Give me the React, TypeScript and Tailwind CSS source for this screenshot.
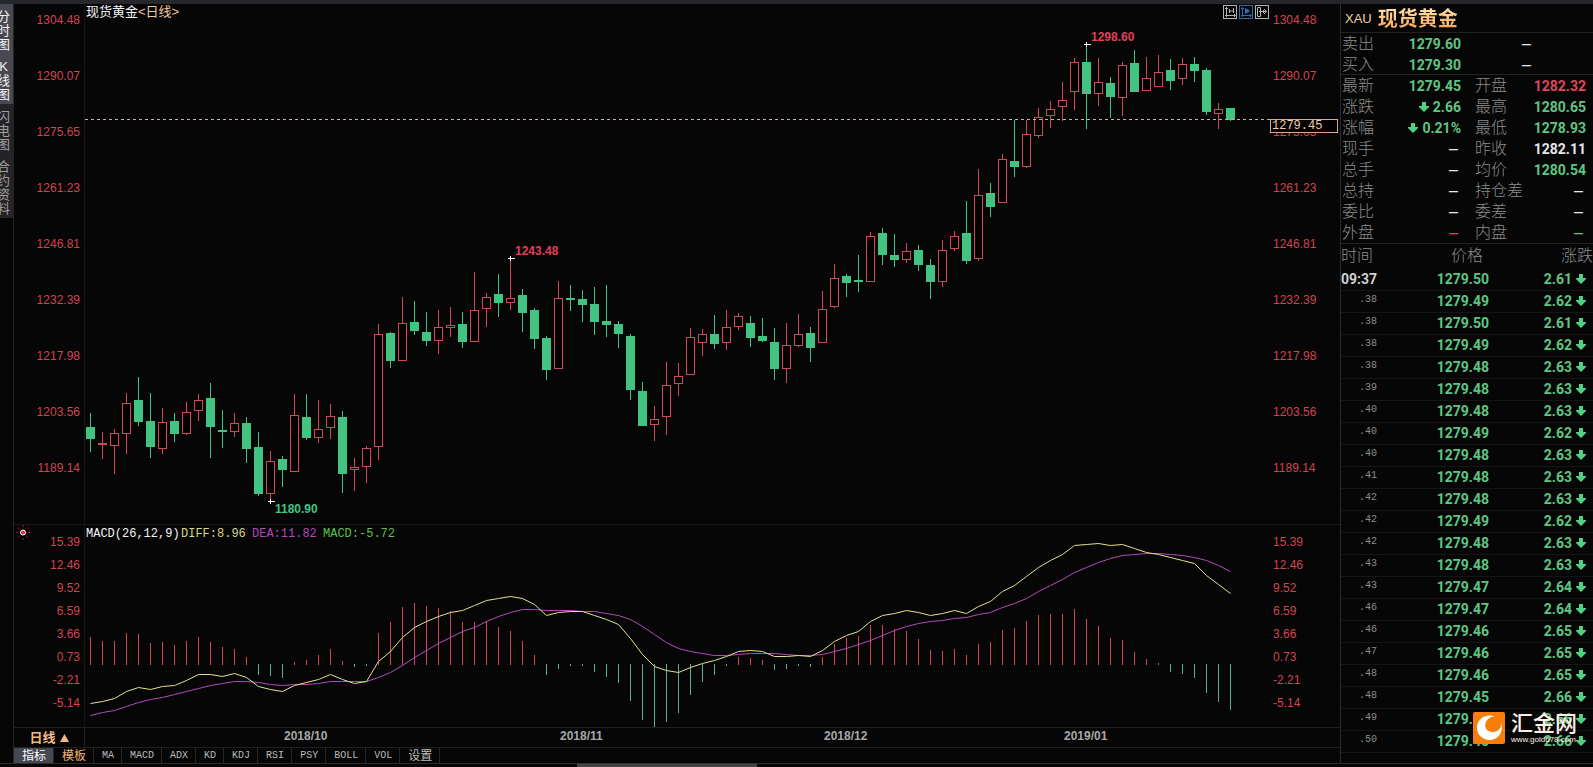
import { useState } from "react";

type Candle = [number, number, number, number, "u" | "d"];

// high, body top, body bottom, low (pane pixels), direction
const candles: Candle[] = [
  [413, 427, 439, 452, "d"], [432, 443, 444, 459, "u"], [429, 433, 446, 474, "u"], [393, 403, 434, 454, "u"],
  [377, 400, 422, 426, "d"], [393, 421, 447, 458, "d"], [408, 422, 449, 454, "u"], [413, 421, 434, 442, "d"],
  [402, 412, 434, 435, "u"], [394, 400, 411, 421, "u"], [383, 398, 427, 458, "d"], [410, 430, 432, 448, "d"],
  [413, 423, 432, 437, "u"], [417, 423, 449, 463, "d"], [432, 447, 494, 496, "d"], [451, 461, 494, 500, "u"],
  [456, 459, 470, 487, "d"], [394, 415, 472, 472, "u"], [394, 417, 438, 440, "d"], [400, 429, 438, 443, "u"],
  [404, 416, 428, 439, "u"], [411, 417, 474, 493, "d"], [458, 467, 470, 491, "u"], [446, 448, 467, 483, "u"],
  [324, 334, 447, 460, "u"], [332, 333, 361, 368, "d"], [297, 323, 361, 361, "u"], [301, 322, 331, 335, "d"],
  [312, 332, 341, 346, "d"], [310, 327, 341, 354, "u"], [307, 325, 328, 337, "u"], [312, 324, 342, 348, "d"],
  [272, 310, 342, 342, "u"], [293, 297, 309, 327, "u"], [274, 294, 303, 317, "d"], [260, 298, 303, 310, "u"],
  [289, 295, 313, 332, "d"], [308, 310, 339, 349, "d"], [336, 338, 370, 380, "d"], [281, 298, 369, 369, "u"],
  [285, 298, 300, 311, "d"], [290, 299, 305, 322, "d"], [287, 304, 322, 335, "d"], [285, 321, 325, 337, "d"],
  [321, 324, 334, 348, "d"], [334, 336, 390, 400, "d"], [382, 391, 426, 426, "d"], [406, 419, 425, 441, "u"],
  [362, 385, 417, 435, "u"], [363, 376, 384, 396, "u"], [328, 337, 375, 375, "u"], [329, 334, 343, 356, "u"],
  [315, 334, 344, 349, "d"], [310, 327, 343, 350, "u"], [313, 316, 327, 330, "u"], [316, 323, 338, 347, "d"],
  [318, 336, 341, 342, "d"], [328, 342, 369, 380, "d"], [323, 345, 369, 383, "u"], [314, 334, 346, 347, "u"],
  [327, 333, 348, 362, "d"], [291, 309, 343, 343, "u"], [264, 278, 307, 308, "u"], [274, 276, 283, 297, "d"],
  [255, 280, 282, 292, "d"], [232, 236, 282, 282, "u"], [228, 233, 255, 265, "d"], [234, 255, 260, 267, "d"],
  [243, 251, 260, 263, "u"], [245, 250, 265, 271, "d"], [259, 265, 282, 299, "d"], [240, 250, 282, 287, "u"],
  [231, 236, 249, 251, "u"], [201, 233, 261, 264, "d"], [169, 195, 259, 261, "u"], [183, 193, 207, 217, "d"],
  [154, 159, 203, 203, "u"], [120, 161, 167, 177, "d"], [120, 134, 167, 168, "u"], [108, 117, 136, 138, "u"],
  [101, 109, 116, 128, "u"], [82, 100, 107, 121, "u"], [58, 62, 92, 110, "u"], [45, 62, 94, 129, "d"],
  [58, 82, 94, 106, "u"], [77, 83, 97, 118, "d"], [62, 65, 98, 116, "u"], [50, 63, 92, 92, "d"],
  [57, 78, 91, 91, "u"], [55, 72, 87, 87, "u"], [59, 70, 81, 90, "d"], [58, 64, 79, 85, "u"],
  [57, 64, 71, 82, "d"], [68, 70, 112, 115, "d"], [103, 109, 114, 129, "u"], [108, 108, 120, 121, "d"],
];

const histogram = [
  637, 641, 641, 633, 634, 643, 642, 645, 641, 637, 642, 647, 649, 657, 675, 676, 678, 662, 660, 655, 649, 661, 667,
  666, 633, 622, 607, 603, 606, 608, 611, 622, 622, 621, 627, 631, 641, 655, 675, 669, 666, 666, 672, 677, 683, 701,
  720, 727, 722, 713, 695, 682, 675, 666, 657, 658, 660, 670, 669, 666, 667, 657, 644, 638, 636, 625, 625, 629, 631,
  639, 650, 651, 649, 655, 644, 642, 630, 628, 621, 615, 614, 614, 609, 619, 626, 638, 640, 652, 659, 663, 672, 674,
  678, 693, 702, 710,
];

const diff = [
  703, 701, 698, 691, 687, 689, 686, 685, 680, 674, 674, 676, 673, 677, 686, 689, 691, 685, 682, 679, 674, 679, 683,
  681, 661, 651, 637, 627, 621, 616, 612, 610, 605, 600, 598, 596, 598, 604, 615, 612, 611, 611, 615, 619, 624, 638,
  654, 666, 670, 672, 667, 663, 660, 656, 651, 650, 651, 656, 656, 655, 656, 650, 641, 635, 631, 621, 615, 613, 610,
  612, 615, 613, 610, 613, 606, 601, 591, 585, 576, 567, 560, 554, 545, 544, 543, 545, 544, 548, 552, 554, 557, 560,
  563, 575, 584, 593,
];

const dea = [
  715, 712, 710, 706, 702, 699, 697, 694, 691, 688, 685, 683, 681, 681, 682, 684, 685, 684, 684, 683, 681, 681, 681,
  681, 677, 672, 665, 657, 650, 643, 637, 631, 627, 621, 616, 612, 609, 609, 610, 610, 610, 611, 611, 613, 615, 619,
  626, 634, 642, 648, 651, 653, 655, 655, 654, 653, 653, 653, 654, 655, 655, 654, 651, 648, 644, 640, 635, 630, 626,
  623, 621, 620, 618, 617, 614, 612, 607, 603, 598, 591, 585, 579, 572, 567, 562, 558, 555, 554, 553, 553, 554, 555,
  557, 560, 565, 571,
];

const PRICE_TOP = 4;
const MACD_TOP = 525;
const MACD_ZERO = 665;
const RED = "#cf4a58";
const GREEN = "#43c382";

const priceTicks = ["1304.48", "1290.07", "1275.65", "1261.23", "1246.81", "1232.39", "1217.98", "1203.56", "1189.14"];
const macdTicks = ["15.39", "12.46", "9.52", "6.59", "3.66", "0.73", "-2.21", "-5.14"];
const indicators = ["指标", "模板", "MA", "MACD", "ADX", "KD", "KDJ", "RSI", "PSY", "BOLL", "VOL", "设置"];
const sideTabs = ["分时图", "K线图", "闪电图", "合约资料"];

const extremes = [
  { i: 15, y: 501, label: "1180.90", dx: 5, dy: 12, color: GREEN },
  { i: 35, y: 258, label: "1243.48", dx: 5, dy: -3, color: "#e0405a" },
  { i: 83, y: 44, label: "1298.60", dx: 5, dy: -3, color: "#e0405a" },
];

const months = [
  { x: 199, label: "2018/10" },
  { x: 475, label: "2018/11" },
  { x: 739, label: "2018/12" },
  { x: 979, label: "2019/01" },
];

interface Quote {
  label: string;
  value: string;
  tone: string;
  arrow?: boolean;
}

const green = "text-[#5fc583]";
const quotes: [Quote, Quote][] = [
  [{ label: "最新", value: "1279.45", tone: green }, { label: "开盘", value: "1282.32", tone: "text-[#e0455c]" }],
  [{ label: "涨跌", value: "2.66", tone: green, arrow: true }, { label: "最高", value: "1280.65", tone: green }],
  [{ label: "涨幅", value: "0.21%", tone: green, arrow: true }, { label: "最低", value: "1278.93", tone: green }],
  [{ label: "现手", value: "–", tone: "text-gray-200" }, { label: "昨收", value: "1282.11", tone: "text-gray-200" }],
  [{ label: "总手", value: "–", tone: "text-gray-200" }, { label: "均价", value: "1280.54", tone: green }],
  [{ label: "总持", value: "–", tone: "text-gray-200" }, { label: "持仓差", value: "–", tone: "text-gray-200" }],
  [{ label: "委比", value: "–", tone: "text-gray-200" }, { label: "委差", value: "–", tone: "text-gray-200" }],
  [{ label: "外盘", value: "–", tone: "text-[#e0455c]" }, { label: "内盘", value: "–", tone: green }],
];

const trades = [
  ["09:37", "1279.50", "2.61"], [".38", "1279.49", "2.62"], [".38", "1279.50", "2.61"], [".38", "1279.49", "2.62"],
  [".38", "1279.48", "2.63"], [".39", "1279.48", "2.63"], [".40", "1279.48", "2.63"], [".40", "1279.49", "2.62"],
  [".40", "1279.48", "2.63"], [".41", "1279.48", "2.63"], [".42", "1279.48", "2.63"], [".42", "1279.49", "2.62"],
  [".42", "1279.48", "2.63"], [".43", "1279.48", "2.63"], [".43", "1279.47", "2.64"], [".46", "1279.47", "2.64"],
  [".46", "1279.46", "2.65"], [".47", "1279.46", "2.65"], [".48", "1279.46", "2.65"], [".48", "1279.45", "2.66"],
  [".49", "1279.45", "2.66"], [".50", "1279.45", "2.66"],
];

const mono = "font-['Liberation_Mono','Noto_Sans_CJK_SC',monospace]";
const bold = "font-['Roboto','Noto_Sans_CJK_SC',sans-serif] font-bold";

function candleX(i: number) {
  return 5 + i * 12;
}

function toPoints(values: number[]) {
  return values.map((y, i) => `${candleX(i) + 0.5},${y + 0.5}`).join(" ");
}

function DownArrow() {
  return (
    <svg viewBox="0 0 10 10" className="w-[10px] h-[10px] shrink-0 fill-[#4fd183]" aria-hidden="true">
      <path d="M3 0H7V4H10V5L5 10L0 5V4H3Z" />
    </svg>
  );
}

function AxisLabels({ ticks, className }: { ticks: string[]; className: string }) {
  return (
    <ul className={`flex flex-col text-xs leading-4 text-[#d04453] ${className}`}>
      {ticks.map((tick) => (
        <li key={tick}>{tick}</li>
      ))}
    </ul>
  );
}

function PriceChart() {
  return (
    <svg className="block w-full h-[520px]" role="img" aria-label="现货黄金 日线">
      <g transform={`translate(0 ${-PRICE_TOP})`} shapeRendering="crispEdges">
        {candles.map(([high, top, bottom, low, dir], i) => {
          const x = candleX(i);
          if (dir === "d") {
            return (
              <g key={i} fill={GREEN}>
                <rect x={x} y={high} width={1} height={low - high} />
                <rect x={x - 4} y={top} width={9} height={bottom - top} />
              </g>
            );
          }
          return (
            <g key={i} fill={RED}>
              <rect x={x} y={high} width={1} height={top - high} />
              <rect x={x} y={bottom} width={1} height={low - bottom} />
              <rect x={x - 3.5} y={top + 0.5} width={8} height={bottom - top - 1} fill="#000" stroke={RED} />
              {bottom - top < 2 && <rect x={x - 4} y={top} width={9} height={2} />}
            </g>
          );
        })}
        <line x1="0" x2="100%" y1="119.5" y2="119.5" stroke="#dcb088" strokeDasharray="3 3" />
        {extremes.map((e) => (
          <g key={e.label}>
            <path d={`M${candleX(e.i) - 2} ${e.y + 0.5}h7M${candleX(e.i) + 0.5} ${e.y - 2}v5`} stroke="#fff" />
            <text x={candleX(e.i) + e.dx} y={e.y + e.dy} fill={e.color} className="text-xs font-bold">
              {e.label}
            </text>
          </g>
        ))}
      </g>
    </svg>
  );
}

function MacdChart() {
  return (
    <svg className="block w-full h-[202px]" role="img" aria-label="MACD">
      <g transform={`translate(0 ${-MACD_TOP})`}>
        {histogram.map((y, i) => (
          <rect
            key={i}
            x={candleX(i)}
            y={Math.min(y, MACD_ZERO - 1)}
            width={1}
            height={y < MACD_ZERO ? MACD_ZERO - y : y - MACD_ZERO + 1}
            fill={y < MACD_ZERO ? "#cf4a50" : "#5fb088"}
          />
        ))}
        <polyline points={toPoints(dea)} fill="none" stroke="#b648b8" />
        <polyline points={toPoints(diff)} fill="none" stroke="#e4e08c" />
      </g>
    </svg>
  );
}

function ChartTools() {
  return (
    <div className="flex gap-[2px]">
      <button type="button" aria-label="压缩" className="w-[14px] h-[14px] border border-[#b4b4b4] text-[#b4b4b4]">
        <svg viewBox="0 0 12 12" className="block w-full h-full" fill="none" stroke="currentColor">
          <path d="M2.5 1V11M1 9.5H11M5.5 3V7M9.5 2V7M6 5H9M10 8L11.5 9.5L10 11M1 3L2.5 1.5L4 3" />
        </svg>
      </button>
      <button type="button" aria-label="播放" className="w-[14px] h-[14px] border border-[#2f6db0] text-[#2f6db0]">
        <svg viewBox="0 0 12 12" className="block w-full h-full" fill="none" stroke="currentColor">
          <path d="M2.5 1V11M1 9.5H11M1 3L2.5 1.5L4 3M10 8L11.5 9.5L10 11" />
          <path d="M5.5 2.5V7.5L9.5 5Z" fill="currentColor" />
        </svg>
      </button>
      <button type="button" aria-label="展开" className="w-[14px] h-[14px] border border-[#b4b4b4] text-[#b4b4b4]">
        <svg viewBox="0 0 12 12" className="block w-full h-full" fill="none" stroke="currentColor">
          <path d="M1.5 1.5H4.5V10.5H1.5ZM3 5.5H10M8 3L10.5 5.5L8 8M7.5 4V7" />
        </svg>
      </button>
    </div>
  );
}

function QuotePanel() {
  return (
    <aside className="relative w-[253px] shrink-0 border-l border-[#2a2a2a]">
      <h1 className="flex items-center h-[29px] pl-1 pt-px gap-[6px] border-b border-[#222]">
        <span className="text-[13px] text-[#f3cfa6]">XAU</span>
        <span className="text-xl leading-7 font-bold bg-linear-to-b from-[#ffe9b8] to-[#f79a3c] bg-clip-text text-transparent">
          现货黄金
        </span>
      </h1>

      <dl className="h-[42px] border-b border-[#222] leading-5">
        {[["卖出", "1279.60"], ["买入", "1279.30"]].map(([label, value]) => (
          <div key={label} className="flex items-center h-[21px] pl-px">
            <dt className="w-12 text-base leading-5 font-light text-[#8c8c8c]">{label}</dt>
            <dd className={`w-[71px] text-right text-sm leading-5 ${bold} ${green}`}>{value}</dd>
            <dd className="w-[70px] text-right text-base leading-5 text-gray-200">–</dd>
          </div>
        ))}
      </dl>

      <dl className="border-b border-[#222]">
        {quotes.map((pair) => (
          <div key={pair[0].label} className="flex h-[21px] pl-px pr-[7px]">
            {pair.map((q, col) => (
              <div key={q.label} className={col === 0 ? "flex items-center w-[119px] mr-[14px]" : "flex items-center flex-1"}>
                <dt className="text-base leading-5 font-light text-[#8c8c8c]">{q.label}</dt>
                {q.value === "–" ? (
                  <dd className={`flex-1 pr-[3px] text-right text-base leading-5 ${q.tone}`}>–</dd>
                ) : (
                  <dd className={`flex items-center justify-end gap-1 flex-1 text-sm ${bold} ${q.tone}`}>
                    {q.arrow && <DownArrow />}
                    {q.value}
                  </dd>
                )}
              </div>
            ))}
          </div>
        ))}
      </dl>

      <table className="w-full table-fixed border-collapse">
        <thead>
          <tr className="h-6 text-base leading-5 text-[#8c8c8c]">
            <th className="w-9 p-0 text-left font-light">时间</th>
            <th className="w-[106px] p-0 text-right font-light">价格</th>
            <th className="p-0 text-right font-light">涨跌</th>
          </tr>
        </thead>
        <tbody>
          {trades.map(([time, price, change], i) => (
            <tr key={i} className={`h-[22px] border-b border-[#151515] text-sm leading-5 ${green}`}>
              <td className={i === 0 ? `p-0 text-[#d0d0d0] ${bold}` : `p-0 pb-[3px] text-right text-[10px] leading-4 text-[#8c8c8c] ${mono}`}>
                {time}
              </td>
              <td className={`p-0 text-right ${bold}`}>
                <span className="-mr-[6px]">{price}</span>
              </td>
              <td className={`p-0 pr-[7px] ${bold}`}>
                <span className="flex items-center justify-end gap-1">
                  {change}
                  <DownArrow />
                </span>
              </td>
            </tr>
          ))}
        </tbody>
      </table>

      {/* site badge over the last trades */}
      <a href="#" className="absolute right-4 bottom-[19px] flex items-center gap-[6px]">
        <svg viewBox="0 0 32 32" className="w-8 h-8" aria-hidden="true">
          <rect width="32" height="32" rx="2" fill="#f97d0b" />
          <path
            d="M22 4.500C12 1 3 8 4 17C5 25 12 28.500 18 28C26 27 31 19 28 10C29 16 25 20 20 20C14 20 10.500 15 13 10C14.500 6.500 18 4.500 22 4.500Z"
            fill="#fff"
          />
        </svg>
        <span className="flex flex-col text-[#fdeee2]">
          <span className="text-[22px] leading-6 font-medium">汇金网</span>
          <span className="text-[8px] leading-2">www.gold678.com</span>
        </span>
      </a>
    </aside>
  );
}

export default function App() {
  const [tab, setTab] = useState("K线图");
  const [indicator, setIndicator] = useState("指标");

  function tabStyle(name: string) {
    if (name === tab || name === "分时图") return "bg-[#484850] text-gray-100";
    return "bg-[#242428] text-[#a0a0a0]";
  }

  return (
    <div className="min-h-screen flex flex-col bg-[#060606] overflow-hidden font-['Liberation_Sans','Noto_Sans_CJK_SC',sans-serif]">
      <div className="h-1 bg-[#26272b]" />

      <div className="flex flex-1">
        <nav className="w-[14px] shrink-0 border-r border-[#242424] overflow-hidden">
          {sideTabs.map((name) => (
            <button
              key={name}
              type="button"
              onClick={() => setTab(name)}
              className={`flex flex-col items-center w-full pt-[6px] pb-[2px] text-[13px] leading-[14px] ${tabStyle(name)}`}
            >
              {name.split("").map((char) => (
                <span key={char} className="-ml-[6px]">
                  {char}
                </span>
              ))}
            </button>
          ))}
        </nav>

        <main className="flex flex-col flex-1 min-w-0">
          <section className="flex border-b border-[#181818]">
            <AxisLabels ticks={priceTicks} className="w-[71px] pt-2 pr-1 gap-10 items-end border-r border-[#161616]" />
            <div className="relative flex-1 min-w-0">
              <PriceChart />
              <div className="absolute inset-x-0 top-0 flex justify-between px-px pt-px">
                <h2 className="text-[13px] leading-[14px] text-gray-100">
                  现货黄金<span className="text-[#f0c8a0]">&lt;日线&gt;</span>
                </h2>
                <ChartTools />
              </div>
            </div>
            <div className="relative w-[70px]">
              <AxisLabels ticks={priceTicks} className="pt-2 pl-[3px] gap-10" />
              <output className={`absolute left-0 top-[115px] w-[68px] h-[14px] pl-px border border-[#e0a884] bg-black text-xs leading-3 text-[#f0cda8] ${mono}`}>
                1279.45
              </output>
            </div>
          </section>

          <section className="flex">
            <div className="flex justify-between w-[71px] border-r border-[#161616]">
              <button type="button" aria-label="指标参数" className="self-start w-4 h-4 ml-px">
                <svg viewBox="0 0 16 16" className="block w-full h-full">
                  <path
                    d="M8 0V2M8 13V15M1 7.5H3M13 7.5H15M3 2.5L4.5 4M13 2.5L11.5 4M3 12.5L4.5 11M13 12.5L11.5 11"
                    stroke="#a01830"
                  />
                  <circle cx="8" cy="7.5" r="2.5" fill="#e02848" stroke="#fff" />
                </svg>
              </button>
              <AxisLabels ticks={macdTicks} className="pt-[9px] pr-1 gap-[7px] items-end" />
            </div>
            <div className="relative flex-1 min-w-0">
              <MacdChart />
              <p className={`absolute left-0 top-px flex pl-px text-xs leading-4 ${mono}`}>
                <span className="w-[95px] text-gray-100">MACD(26,12,9)</span>
                <span className="w-[71px] text-[#d8d490]">DIFF:8.96</span>
                <span className="w-[71px] text-[#b048b8]">DEA:11.82</span>
                <span className="text-[#58c050]">MACD:-5.72</span>
              </p>
            </div>
            <div className="w-[70px]">
              <AxisLabels ticks={macdTicks} className="pt-[9px] pl-[3px] gap-[7px]" />
            </div>
          </section>

          <div className="flex h-[21px] border-y border-[#1f1f1f]">
            <button
              type="button"
              className="flex items-center justify-center gap-1 w-[71px] border-r border-[#222] text-[13px] leading-[18px] font-bold text-[#f0b888]"
            >
              日线
              <svg viewBox="0 0 9 8" className="w-[9px] h-2 fill-current" aria-hidden="true">
                <path d="M4.5 0L9 8H0Z" />
              </svg>
            </button>
            <svg className="block flex-1 h-full" role="img" aria-label="日期">
              {months.map((m) => (
                <text key={m.label} x={m.x} y="12" fill="#a8a8a8" className="text-xs font-bold">
                  {m.label}
                </text>
              ))}
            </svg>
          </div>

          <div className="flex h-[15px]">
            {indicators.map((name) => {
              const latin = /^[A-Z]+$/.test(name);
              return (
                <button
                  key={name}
                  type="button"
                  onClick={() => setIndicator(name)}
                  className={`pl-2 pr-[7px] border-r border-[#262626] ${latin ? `text-[10px] leading-[14px] ${mono}` : "text-xs leading-[14px]"} ${
                    name === indicator ? "bg-[#454753] text-white" : name === "模板" ? "text-[#f0b070]" : "text-[#bcbcbc]"
                  }`}
                >
                  {name}
                </button>
              );
            })}
          </div>
        </main>

        <QuotePanel />
      </div>

      <div className="flex justify-center h-1 pr-[259px] border-t border-[#2c2c2c]">
        <div className="w-[180px] bg-[#444]" />
      </div>
    </div>
  );
}
